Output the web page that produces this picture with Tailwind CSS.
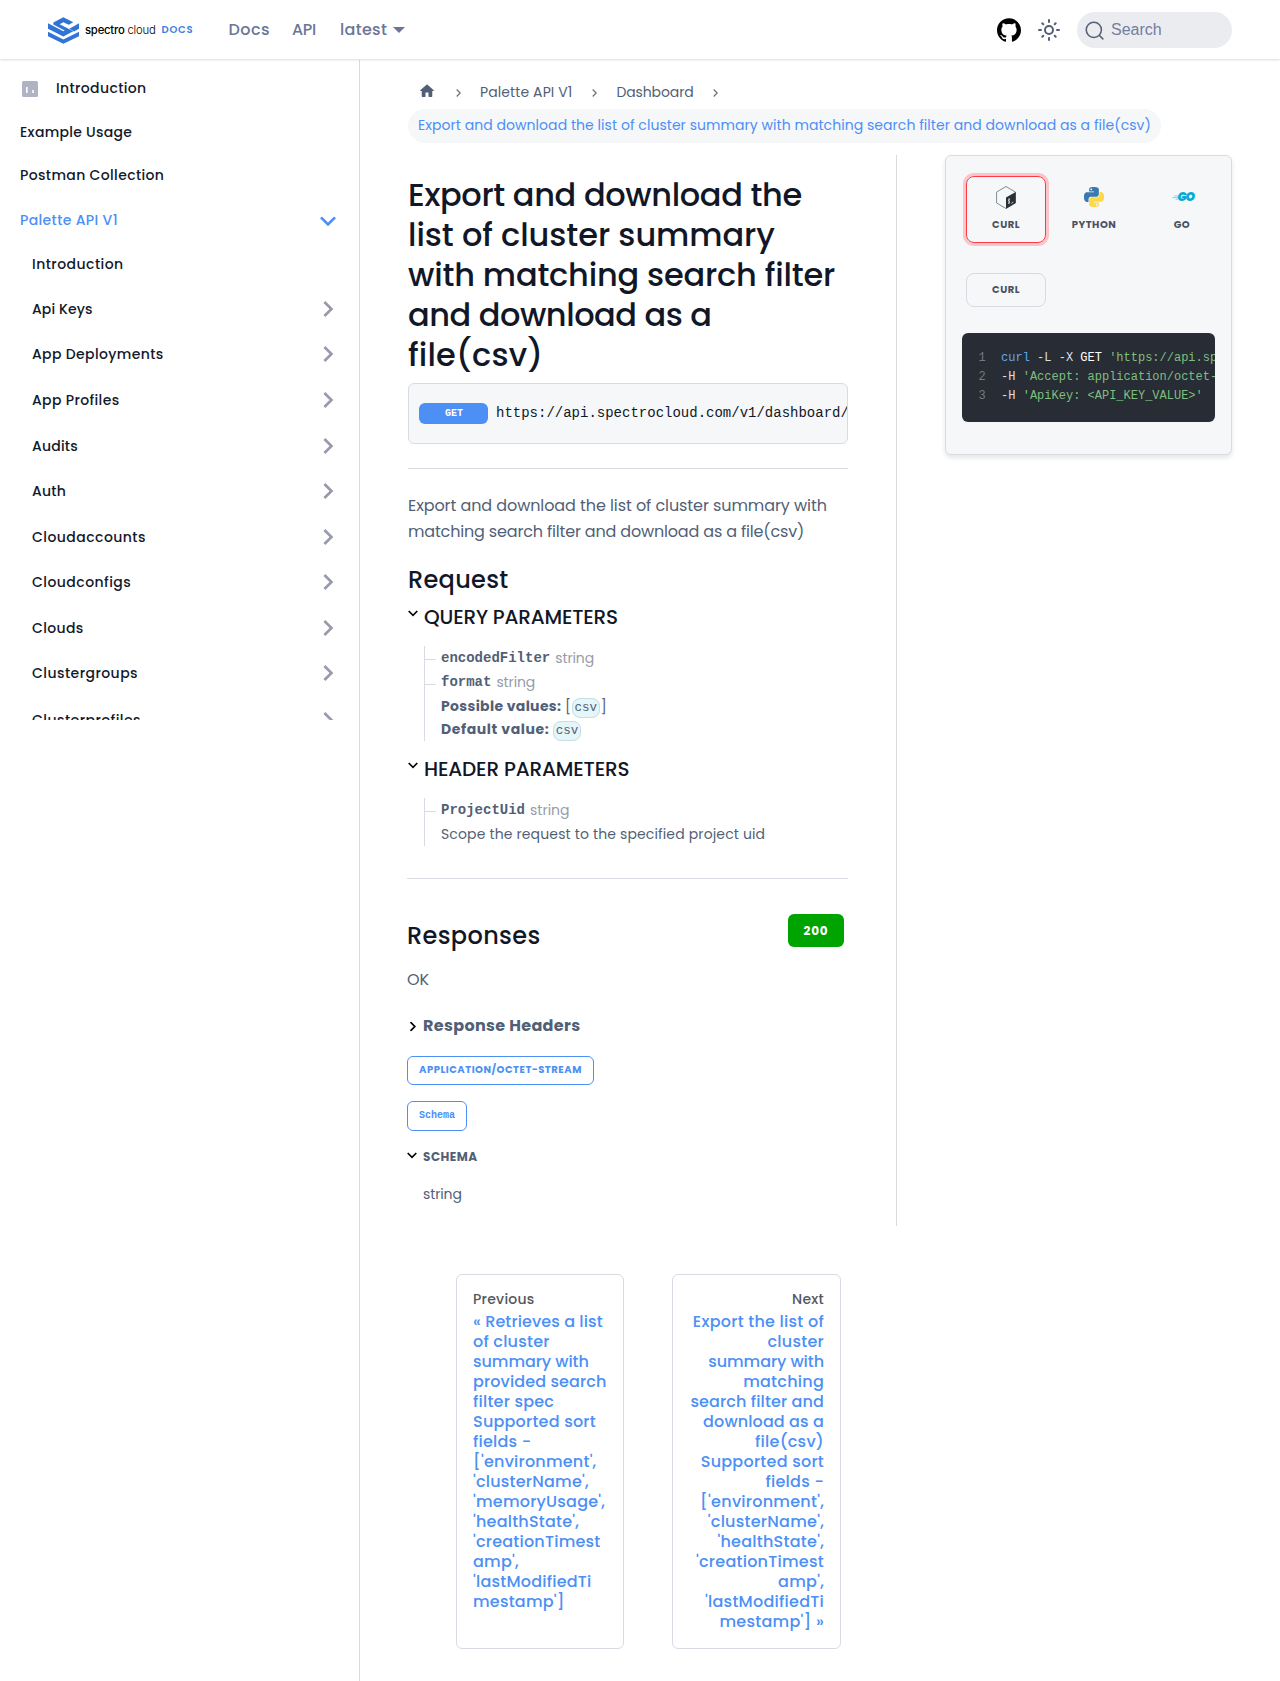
<!DOCTYPE html>
<html lang="en">
<head>
<meta charset="utf-8">
<title>Export and download the list of cluster summary | Palette API</title>
<script src="https://cdn.jsdelivr.net/npm/@tailwindcss/browser@4"></script>
</head>
<body class="bg-white font-[Poppins,Inter,sans-serif] text-[16px] text-[#525f76]">

<svg class="hidden">
  <symbol id="chev" viewBox="0 0 24 24"><path d="M7.41 15.41 12 10.83l4.59 4.58L18 14l-6-6-6 6z"/></symbol>
  <symbol id="mark" viewBox="0 0 10 7"><path d="M.7 1 5 5.3 9.3 1" fill="none" stroke="currentColor" stroke-width="1.7"/></symbol>
</svg>

<div class="flex min-h-[1681px] flex-col">
  <header class="relative flex h-[59px] shrink-0 items-center bg-white pr-12 pl-12 shadow-[0_1px_2px_0_rgba(0,0,0,0.15)]">
    <a class="flex items-center">
      <svg class="mt-px h-[27px] w-[31px]" viewBox="0 0 93 80" fill="#3074d6">
        <path d="M46 0 76 15 62 23 46 15 35 21 76 42 46 58 0 35V18L46 42 50 40 16 22V16z"/>
        <path d="M93 18V35L78 43 64 35z"/>
        <path d="M0 44 46 67 93 44V57L46 80 0 57z"/>
      </svg>
      <span class="ml-[6px] font-[Inter,sans-serif] text-[11.3px] leading-4 tracking-[-0.22px] text-black"><span class="font-medium">spectro</span> <span class="font-light">cloud</span></span>
      <span class="ml-[6px] text-[10px] leading-4 font-semibold tracking-[0.8px] text-[#3d80e0]">DOCS</span>
    </a>
    <nav class="ml-[35px] flex items-center gap-6 pt-px font-medium text-[#6b7697]">
      <a class="tracking-[0.45px]">Docs</a><a class="-ml-0.5 tracking-[-0.3px]">API</a>
      <a class="flex items-center tracking-[0.3px]">latest<span class="ml-[6px] border-x-[6px] border-t-[6px] border-x-transparent border-t-[#6b7697]"></span></a>
    </nav>
    <div class="ml-auto flex items-center">
      <svg class="size-6" viewBox="0 0 24 24" fill="#000"><path d="M12 .297c-6.63 0-12 5.373-12 12 0 5.303 3.438 9.8 8.205 11.385.6.113.82-.258.82-.577 0-.285-.01-1.04-.015-2.04-3.338.724-4.042-1.61-4.042-1.61C4.422 18.07 3.633 17.7 3.633 17.7c-1.087-.744.084-.729.084-.729 1.205.084 1.838 1.236 1.838 1.236 1.07 1.835 2.809 1.305 3.495.998.108-.776.417-1.305.76-1.605-2.665-.3-5.466-1.332-5.466-5.93 0-1.31.465-2.38 1.235-3.22-.135-.303-.54-1.523.105-3.176 0 0 1.005-.322 3.3 1.23.96-.267 1.98-.399 3-.405 1.02.006 2.04.138 3 .405 2.28-1.552 3.285-1.23 3.285-1.23.645 1.653.24 2.873.12 3.176.765.84 1.23 1.91 1.23 3.22 0 4.61-2.805 5.625-5.475 5.92.42.36.81 1.096.81 2.22 0 1.606-.015 2.896-.015 3.286 0 .315.21.69.825.57C20.565 22.092 24 17.592 24 12.297c0-6.627-5.373-12-12-12"/></svg>
      <svg class="ml-4 size-6" viewBox="0 0 24 24" fill="none" stroke="#525f76" stroke-width="2" stroke-linecap="round"><circle cx="12" cy="12" r="4"/><path d="M12 2v2M12 20v2M2 12h2M20 12h2M5.3 5.3l1 1M17.7 17.7l1 1M5.3 18.7l1-1M17.7 6.3l1-1"/></svg>
      <div class="ml-4 mt-px flex h-9 w-[155px] items-center rounded-full bg-[#ebecf0] pl-2">
        <svg class="size-[19px]" viewBox="0 0 20 20" fill="none" stroke="#525f76" stroke-width="1.6" stroke-linecap="round"><circle cx="9.3" cy="9.3" r="8"/><path d="m15.2 15.2 3.6 3.6"/></svg>
        <span class="ml-[7px] font-['Liberation_Sans',sans-serif] text-[#717ea1]">Search</span>
      </div>
    </div>
  </header>

  <div class="flex flex-1 pt-px">
    <aside class="w-[360px] shrink-0 border-r border-[#d9dadd]">
      <div class="h-[660px] overflow-hidden pt-[6.6px] text-[14px] leading-5 font-medium tracking-[0.36px] text-[#12192b]">
        <a class="flex h-[43.5px] items-center pl-[22px]">
          <svg class="mt-0.5 mr-[18px] size-4" viewBox="0 0 16 16"><rect width="16" height="16" rx="1.5" fill="#b0b3c2"/><path d="M4 6h1.6v6H4zM10.2 9h1.6v3h-1.6z" fill="#fff"/></svg>Introduction</a>
        <a class="flex h-[43.5px] items-center pl-5 tracking-[0.28px]">Example Usage</a>
        <a class="flex h-[43.5px] items-center pl-5">Postman Collection</a>
        <a class="flex h-[45.5px] items-center justify-between pr-[15px] pl-5 text-[#4c8ff5]">Palette API V1<svg class="mt-[3px] size-8 rotate-180" fill="#4c8ff5"><use href="#chev"/></svg></a>
        <a class="flex h-[43.5px] items-center pl-8 tracking-[0.45px]">Introduction</a>
        <a class="flex h-[45.56px] items-center justify-between pr-[15px] pl-8 tracking-[0.1px]">Api Keys<svg class="size-8 rotate-90" fill="#9899ad"><use href="#chev"/></svg></a>
        <a class="flex h-[45.56px] items-center justify-between pr-[15px] pl-8">App Deployments<svg class="size-8 rotate-90" fill="#9899ad"><use href="#chev"/></svg></a>
        <a class="flex h-[45.56px] items-center justify-between pr-[15px] pl-8">App Profiles<svg class="size-8 rotate-90" fill="#9899ad"><use href="#chev"/></svg></a>
        <a class="flex h-[45.56px] items-center justify-between pr-[15px] pl-8 tracking-[0.2px]">Audits<svg class="size-8 rotate-90" fill="#9899ad"><use href="#chev"/></svg></a>
        <a class="flex h-[45.56px] items-center justify-between pr-[15px] pl-8 tracking-[0.2px]">Auth<svg class="size-8 rotate-90" fill="#9899ad"><use href="#chev"/></svg></a>
        <a class="flex h-[45.56px] items-center justify-between pr-[15px] pl-8 tracking-[0.45px]">Cloudaccounts<svg class="size-8 rotate-90" fill="#9899ad"><use href="#chev"/></svg></a>
        <a class="flex h-[45.56px] items-center justify-between pr-[15px] pl-8 tracking-[0.45px]">Cloudconfigs<svg class="size-8 rotate-90" fill="#9899ad"><use href="#chev"/></svg></a>
        <a class="flex h-[45.56px] items-center justify-between pr-[15px] pl-8">Clouds<svg class="size-8 rotate-90" fill="#9899ad"><use href="#chev"/></svg></a>
        <a class="flex h-[45.56px] items-center justify-between pr-[15px] pl-8 tracking-[0.45px]">Clustergroups<svg class="size-8 rotate-90" fill="#9899ad"><use href="#chev"/></svg></a>
        <a class="flex h-[45.56px] items-center justify-between pr-[15px] pl-8 tracking-[0.45px]"><span class="pt-0.5">Clusterprofiles</span><svg class="mt-0.5 size-8 rotate-90" fill="#9899ad"><use href="#chev"/></svg></a>
      </div>
    </aside>

    <main class="flex-1 px-12 pt-4">
      <nav class="text-[14px] leading-[21px]">
        <div class="flex h-[33px] items-center pl-[10px]">
          <svg class="-mt-1 size-[18px]" viewBox="0 0 24 24" fill="#525f76"><path d="M10 19v-5h4v5c0 .55.45 1 1 1h3c.55 0 1-.45 1-1v-7h1.7c.46 0 .68-.57.33-.87L12.67 3.6c-.38-.34-.96-.34-1.34 0l-8.36 7.53c-.34.3-.13.87.33.87H5v7c0 .55.45 1 1 1h3c.55 0 1-.45 1-1z"/></svg>
          <svg class="ml-[20px] h-[8px] w-[5px]" viewBox="0 0 5 8" fill="none" stroke="#6b7280" stroke-width="1.3"><path d="M.7.5 4.2 4 .7 7.5"/></svg>
          <span class="ml-[19px] tracking-[0.1px]">Palette API V1</span>
          <svg class="ml-5 h-[8px] w-[5px]" viewBox="0 0 5 8" fill="none" stroke="#6b7280" stroke-width="1.3"><path d="M.7.5 4.2 4 .7 7.5"/></svg>
          <span class="ml-[19px] tracking-[-0.1px]">Dashboard</span>
          <svg class="ml-[19px] h-[8px] w-[5px]" viewBox="0 0 5 8" fill="none" stroke="#6b7280" stroke-width="1.3"><path d="M.7.5 4.2 4 .7 7.5"/></svg>
        </div>
        <div class="flex"><span class="flex h-[34px] items-center rounded-full bg-[#f6f7f9] px-[10px] pb-0.5 tracking-[0.05px] whitespace-nowrap text-[#4c8ff5]">Export and download the list of cluster summary with matching search filter and download as a file(csv)</span></div>
      </nav>

      <div class="mt-3 flex h-[1071px]">
        <article class="w-[489px] shrink-0 border-r border-[#d9dadd] pt-5 pr-12">
          <h1 class="text-[32px] leading-10 font-medium text-[#111727]"><span class="tracking-[-0.36px]">Export and download the</span><br><span class="tracking-[-0.06px]">list of cluster summary</span><br><span class="tracking-[-0.2px]">with matching search filter</span><br><span class="tracking-[-0.45px]">and download as a</span><br><span class="tracking-[0.2px]">file(csv)</span></h1>
          <div class="mt-2 flex h-[61px] items-center overflow-hidden rounded-md border border-[#d9dbe2] bg-[#f6f7f9] pl-[10px] font-['Liberation_Mono',monospace] text-[14px] text-[#111727]">
            <span class="flex h-[21px] w-[69px] shrink-0 items-center justify-center rounded-md bg-[#4c8ff5] pl-px text-[10px] font-bold text-white">GET</span>
            <span class="ml-2 whitespace-nowrap">https://api.spectrocloud.com/v1/dashboard/clusters</span>
          </div>
          <hr class="mt-6 border-[#d9dbe2]">
          <p class="mt-6 leading-[26px] whitespace-nowrap"><span class="tracking-[-0.08px]">Export and download the list of cluster summary with</span><br><span class="tracking-[-0.17px]">matching search filter and download as a file(csv)</span></p>
          <h2 class="mt-5 text-[24px] leading-[30px] font-medium tracking-[0.3px] text-[#111727]">Request</h2>

          <h3 class="mt-[10px] flex text-[20px] leading-[25px] font-medium tracking-[-0.19px] text-[#111727]"><svg class="mt-[5px] mr-[6px] h-[7px] w-[10px] text-black"><use href="#mark"/></svg>QUERY PARAMETERS</h3>
          <ul class="mt-4 ml-4 border-l border-[#d9dbe2] pb-px text-[14px]">
            <li class="flex h-6 leading-[25px]"><span class="mt-[13px] mr-[5px] h-px w-[11px] bg-[#d9dbe2]"></span><b class="font-['Liberation_Mono',monospace]">encodedFilter</b><span class="ml-[5px] tracking-[-0.12px] text-[#979ba9]">string</span></li>
            <li class="flex h-6 leading-[25px]"><span class="mt-[14px] mr-[5px] h-px w-[11px] bg-[#d9dbe2]"></span><b class="font-['Liberation_Mono',monospace]">format</b><span class="ml-[5px] tracking-[-0.12px] text-[#979ba9]">string</span></li>
            <li class="h-[23px] pl-4 leading-[25px]"><b class="tracking-[0.34px]">Possible values:</b> [<code class="mx-px rounded-lg border border-[#c9dde2] bg-[#e5f6fb] px-[1.5px] py-[2px] font-['Liberation_Mono',monospace] text-[12.6px] leading-none">csv</code>]</li>
            <li class="h-[23px] pl-4 leading-[25px]"><b class="tracking-[0.6px]">Default value:</b> <code class="rounded-lg border border-[#c9dde2] bg-[#e5f6fb] px-[1.5px] py-[2px] font-['Liberation_Mono',monospace] text-[12.6px] leading-none">csv</code></li>
          </ul>

          <h3 class="mt-[15px] flex text-[20px] leading-[26px] font-medium tracking-[-0.15px] text-[#111727]"><svg class="mt-[6px] mr-[6px] h-[7px] w-[10px] text-black"><use href="#mark"/></svg>HEADER PARAMETERS</h3>
          <ul class="mt-4 ml-4 border-l border-[#d9dbe2] text-[14px]">
            <li class="flex h-6 leading-[25px]"><span class="mt-[13px] mr-[5px] h-px w-[11px] bg-[#d9dbe2]"></span><b class="font-['Liberation_Mono',monospace]">ProjectUid</b><span class="ml-[5px] text-[#979ba9]">string</span></li>
            <li class="h-6 pl-4 leading-6 tracking-[0.14px]">Scope the request to the specified project uid</li>
          </ul>
          <hr class="mt-8 -ml-px border-[#d9dbe2]">

          <section class="-ml-px">
            <div class="flex justify-between pr-1">
              <h2 class="mt-[42px] text-[24px] leading-[30px] font-medium tracking-[0.35px] text-[#111727]">Responses</h2>
              <span class="mt-[35px] flex h-[33px] w-14 items-center justify-center rounded-md bg-[#00a400] text-[12px] font-bold tracking-[0.9px] text-white">200</span>
            </div>
            <p class="mt-4 leading-[26px]">OK</p>
            <div class="mt-5 flex items-center leading-[26px] font-bold tracking-[0.33px]"><svg class="mr-[5px] ml-px h-[7px] w-[10px] -rotate-90 text-black"><use href="#mark"/></svg>Response Headers</div>
            <div class="mt-[17px] flex"><span class="flex h-[29px] items-center rounded-md border border-[#4c8ff5] px-[11px] pb-[3px] text-[10px] font-bold tracking-[0.52px] text-[#4c8ff5]">APPLICATION/OCTET-STREAM</span></div>
            <div class="mt-4 flex"><span class="flex h-[30px] items-center rounded-md border border-[#4c8ff5] px-[11px] pb-[2px] font-['Liberation_Mono',monospace] text-[10px] font-bold text-[#4c8ff5]">Schema</span></div>
            <div class="mt-4 flex items-center text-[12px] leading-5 font-bold tracking-[0.5px]"><svg class="-mt-[3px] mr-[6px] h-[7px] w-[10px] text-black"><use href="#mark"/></svg>SCHEMA</div>
            <p class="mt-[15px] ml-4 text-[14px] leading-6 tracking-[-0.12px]">string</p>
          </section>
        </article>

        <aside class="ml-12 h-[300px] w-[287px] shrink-0 rounded-md border border-[#d9dbe2] bg-[#f6f7f9] px-4 shadow-[0_3px_5px_rgba(0,0,0,0.1)]">
          <div class="flex gap-2 px-1 pt-5 text-[10px] leading-4 font-bold tracking-[0.5px] text-[#4b5262]">
            <div class="flex h-[67px] w-20 shrink-0 flex-col items-center rounded-lg border border-[#fb3b43] pt-[9px] shadow-[0_0_0_3px_#fac4c8]">
              <svg class="h-[23px] w-5" viewBox="0 0 20 23"><path d="M10 .5 19.4 6v11L10 22.5.6 17V6z" fill="none" stroke="#555b66" stroke-width=".7"/><path d="M10 11.5 19.7 5.9v11.2L10 22.8z" fill="#293138"/><path d="M14 13.2c-1.4-.1-2 1.2-1 1.9s.8 1.9-.8 2.1M13 12.2v6M15.3 17.3l2-1.1" fill="none" stroke="#fff" stroke-width=".7"/></svg>
              <span class="mt-2">CURL</span>
            </div>
            <div class="flex h-[67px] w-20 shrink-0 flex-col items-center pt-[11px]">
              <svg class="size-5" viewBox="0 0 24 24"><path fill="#3a78ad" d="M14.25.18l.9.2.73.26.59.3.45.32.34.34.25.34.16.33.1.3.04.26.02.2-.01.13V8.5l-.05.63-.13.55-.21.46-.26.38-.3.31-.33.25-.35.19-.35.14-.33.1-.3.07-.26.04-.21.02H8.77l-.69.05-.59.14-.5.22-.41.27-.33.32-.27.35-.2.36-.15.37-.1.35-.07.32-.04.27-.02.21v3.06H3.17l-.21-.03-.28-.07-.32-.12-.35-.18-.36-.26-.36-.36-.35-.46-.32-.59-.28-.73-.21-.88-.14-1.05-.05-1.23.06-1.22.16-1.04.24-.87.32-.71.36-.57.4-.44.42-.33.42-.24.4-.16.36-.1.32-.05.24-.01h.16l.06.01h8.16v-.83H6.18l-.01-2.75-.02-.37.05-.34.11-.31.17-.28.25-.26.31-.23.38-.2.44-.18.51-.15.58-.12.64-.1.71-.06.77-.04.84-.02 1.27.05zm-6.3 1.98l-.23.33-.08.41.08.41.23.34.33.22.41.09.41-.09.33-.22.23-.34.08-.41-.08-.41-.23-.33-.33-.22-.41-.09-.41.09z"/><path fill="#ffd845" d="M21.04 6.11l.28.06.32.12.35.18.36.27.36.35.35.47.32.59.28.73.21.88.14 1.04.05 1.23-.06 1.23-.16 1.04-.24.86-.32.71-.36.57-.4.45-.42.33-.42.24-.4.16-.36.09-.32.05-.24.02-.16-.01h-8.22v.82h5.84l.01 2.76.02.36-.05.34-.11.31-.17.29-.25.25-.31.24-.38.2-.44.17-.51.15-.58.13-.64.09-.71.07-.77.04-.84.01-1.27-.04-1.07-.14-.9-.2-.73-.25-.59-.3-.45-.33-.34-.34-.25-.34-.16-.33-.1-.3-.04-.25-.02-.2.01-.13v-5.34l.05-.64.13-.54.21-.46.26-.38.3-.32.33-.24.35-.2.35-.14.33-.1.3-.06.26-.04.21-.02.13-.01h5.84l.69-.05.59-.14.5-.21.41-.28.33-.32.27-.35.2-.36.15-.36.1-.35.07-.32.04-.28.02-.21V6.07h2.09l.14.01zm-6.47 14.25l-.23.33-.08.41.08.41.23.33.33.23.41.08.41-.08.33-.23.23-.33.08-.41-.08-.41-.23-.33-.33-.23-.41-.08-.41.08z"/></svg>
              <span class="mt-[10px]">PYTHON</span>
            </div>
            <div class="flex h-[67px] w-20 shrink-0 flex-col items-center pt-[11px]">
              <div class="flex h-5 w-6 items-center justify-end">
                <svg class="-mr-px h-[5px] w-[7px] shrink-0" viewBox="0 0 7 5" stroke="#7fd3e8" stroke-width=".9"><path d="M2 1h5M0 2.6h7M3.5 4.2H6"/></svg>
                <span class="text-[12px] leading-5 font-black tracking-[-1px] text-[#00acd7] italic">GO</span>
              </div>
              <span class="mt-[10px]">GO</span>
            </div>
          </div>
          <div class="mt-[30px] ml-1 flex h-[34px] w-20 items-center justify-center rounded-lg border border-[#d9dbe2] pb-0.5 text-[10px] font-bold tracking-[0.5px] text-[#4b5262]">CURL</div>
          <pre class="mt-[26px] h-[89px] overflow-hidden rounded-md bg-[#282c34] pt-4 pl-[16.5px] font-['Liberation_Mono',monospace] text-[12px] leading-[19px] text-[#dcdfe4]"><span class="mr-px text-[#737984]">1</span>  <span class="text-[#61a8ea]">curl</span> -L -X <span class="text-white">GET</span> <span class="text-[#7fbf7f]">'https://api.spectrocloud.com'</span>
<span class="mr-px text-[#737984]">2</span>  -H <span class="text-[#7fbf7f]">'Accept: application/octet-stream'</span>
<span class="mr-px text-[#737984]">3</span>  -H <span class="text-[#7fbf7f]">'ApiKey: &lt;API_KEY_VALUE&gt;'</span></pre>
        </aside>
      </div>

      <nav class="mt-12 ml-12 flex gap-12 font-medium">
        <a class="h-[375px] w-[168px] rounded-md border border-[#d9dbe2] pt-[14px] pl-4">
          <div class="text-[14px] leading-[21px] tracking-[0.25px] text-[#525860]">Previous</div>
          <div class="mt-[2px] leading-5 tracking-[0.22px] whitespace-nowrap text-[#4c8ff5]"><span class="tracking-[0.1px]">« Retrieves a list</span><br>of cluster<br><span class="tracking-[-0.05px]">summary with</span><br><span class="tracking-[0.12px]">provided search</span><br>filter spec<br>Supported sort<br>fields -<br>['environment',<br>'clusterName',<br>'memoryUsage',<br>'healthState',<br>'creationTimest<br>amp',<br>'lastModifiedTi<br>mestamp']</div>
        </a>
        <a class="h-[375px] w-[169px] rounded-md border border-[#d9dbe2] pt-[14px] pr-4 text-right">
          <div class="text-[14px] leading-[21px] tracking-[0.25px] text-[#525860]">Next</div>
          <div class="mt-[2px] leading-5 tracking-[0.25px] whitespace-nowrap text-[#4c8ff5]">Export the list of<br>cluster<br><span class="tracking-[-0.05px]">summary with</span><br>matching<br><span class="tracking-[0.12px]">search filter and</span><br><span class="tracking-[0.12px]">download as a</span><br>file(csv)<br>Supported sort<br>fields -<br>['environment',<br>'clusterName',<br>'healthState',<br>'creationTimest<br>amp',<br>'lastModifiedTi<br>mestamp'] »</div>
        </a>
      </nav>
    </main>
  </div>
</div>
</body>
</html>
